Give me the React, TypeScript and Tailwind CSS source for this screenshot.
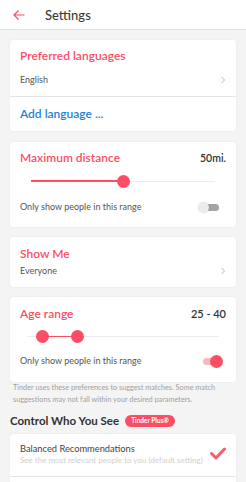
import React from "react";

const RED = "#fd4d64";

function Chevron() {
  return (
    <svg width="6" height="8" viewBox="0 0 6 8" className="shrink-0">
      <path d="M1.5 1 L4.5 4 L1.5 7" fill="none" stroke="#b5b5b5" strokeWidth="1" />
    </svg>
  );
}

function Card({ children, className = "" }: { children: React.ReactNode; className?: string }) {
  return (
    <div className={"mx-[10px] bg-white rounded-[3px] shadow-[0_0_2px_rgba(0,0,0,0.08)] " + className}>
      {children}
    </div>
  );
}

export default function App() {
  return (
    <div
      className="w-[246px] h-[482px] overflow-hidden bg-[#f4f4f4] text-[#424242]"
      style={{ fontFamily: "Lato, 'Open Sans', sans-serif" }}
    >
      {/* Header */}
      <div className="h-[30px] bg-white border-b border-[#e2e2e2] flex items-center">
        <svg width="14" height="12" viewBox="0 0 14 12" className="ml-[12px]">
          <path d="M12.5 6 H2 M6.5 1.5 L2 6 L6.5 10.5" fill="none" stroke={RED} strokeWidth="1.2" />
        </svg>
        <div className="ml-[19px] text-[13px] leading-[16px] text-[#3a3a3a] font-medium">Settings</div>
      </div>

      <div className="pt-[10px] flex flex-col">
        {/* Card 1 */}
        <Card>
          <div className="h-[56px] px-[10px] pt-[9px]">
            <div className="text-[12px] leading-[14px] font-semibold" style={{ color: RED }}>
              Preferred languages
            </div>
            <div className="mt-[10px] flex items-center justify-between text-[9px] leading-[14px] text-[#555]">
              <span>English</span>
              <Chevron />
            </div>
          </div>
          <div className="border-t border-[#e4e4e4] h-[35px] px-[10px] flex items-center text-[12px] font-semibold text-[#1a7fd6]">
            Add language ...
          </div>
        </Card>

        {/* Card 2 */}
        <Card className="mt-[11px] h-[85px] px-[10px] pt-[9px]">
          <div className="flex justify-between items-center leading-[14px]">
            <span className="text-[12px] font-semibold" style={{ color: RED }}>Maximum distance</span>
            <span className="text-[10.5px] font-semibold text-[#333]">50mi.</span>
          </div>
          <div className="relative mt-[10px] h-[12px] mx-[11px]">
            <div className="absolute left-0 right-0 top-[5.5px] h-px bg-[#ececec]" />
            <div className="absolute left-0 w-[92px] top-[5px] h-[1.5px]" style={{ background: RED }} />
            <div className="absolute left-[86px] top-0 w-[13px] h-[13px] rounded-full" style={{ background: RED }} />
          </div>
          <div className="mt-[13px] flex items-center justify-between">
            <span className="text-[9px] leading-[14px] text-[#555]">Only show people in this range</span>
            <div className="relative w-[21px] h-[11px] mr-[7px]">
              <div className="absolute left-[4px] right-0 top-[2px] h-[7px] rounded-full bg-[#a3a3a3]" />
              <div className="absolute left-0 top-0 w-[11px] h-[11px] rounded-full bg-[#ececec] shadow-[0_0_1px_rgba(0,0,0,0.2)]" />
            </div>
          </div>
        </Card>

        {/* Card 3 */}
        <Card className="mt-[10px] h-[50px] px-[10px] pt-[10px]">
          <div className="text-[12px] leading-[14px] font-semibold" style={{ color: RED }}>Show Me</div>
          <div className="mt-[3px] flex items-center justify-between text-[9px] leading-[14px] text-[#555]">
            <span>Everyone</span>
            <Chevron />
          </div>
        </Card>

        {/* Card 4 */}
        <Card className="mt-[10px] h-[85px] px-[10px] pt-[10px]">
          <div className="flex justify-between items-center leading-[14px]">
            <span className="text-[12px] font-semibold" style={{ color: RED }}>Age range</span>
            <span className="text-[11px] font-semibold text-[#333]">25 - 40</span>
          </div>
          <div className="relative mt-[9px] h-[13px] mx-[7px]">
            <div className="absolute left-0 right-0 top-[6px] h-px bg-[#ececec]" />
            <div className="absolute left-[16px] w-[35px] top-[5.5px] h-[1.5px]" style={{ background: RED }} />
            <div className="absolute left-[9px] top-0 w-[13px] h-[13px] rounded-full" style={{ background: RED }} />
            <div className="absolute left-[44px] top-0 w-[13px] h-[13px] rounded-full" style={{ background: RED }} />
          </div>
          <div className="mt-[11px] flex items-center justify-between">
            <span className="text-[9px] leading-[14px] text-[#555]">Only show people in this range</span>
            <div className="relative w-[20px] h-[13px] mr-[3px]">
              <div className="absolute left-0 right-[4px] top-[3px] h-[7px] rounded-full bg-[#f7b7c0]" />
              <div className="absolute right-0 top-0 w-[13px] h-[13px] rounded-full" style={{ background: RED }} />
            </div>
          </div>
        </Card>

        {/* Footer text */}
        <div className="mt-0 px-[13px] text-[7.3px] leading-[12px] text-[#a0a0a0]">
          Tinder uses these preferences to suggest matches. Some match suggestions may not fall within your desired parameters.
        </div>

        {/* Heading */}
        <div className="mt-[8px] px-[10px] flex items-center gap-[6px]">
          <span className="text-[11.5px] leading-[14px] font-bold text-[#333]">Control Who You See</span>
          <span
            className="rounded-full px-[6px] h-[12px] flex items-center text-[6.5px] font-bold text-white"
            style={{ background: RED }}
          >
            Tinder Plus®
          </span>
        </div>

        {/* Card 5 */}
        <Card className="mt-[6px] h-[60px]">
          <div className="h-[43px] px-[10px] pt-[9px] flex items-start justify-between border-b border-[#e4e4e4]">
            <div>
              <div className="text-[9.3px] leading-[12px] text-[#444]">Balanced Recommendations</div>
              <div className="text-[8px] leading-[10px] text-[#cfcfcf] whitespace-nowrap">See the most relevant people to you (default setting)</div>
            </div>
            <svg width="16" height="13" viewBox="0 0 16 13" className="mt-[4px] shrink-0">
              <path d="M1.5 6.5 L6 11 L14.5 2" fill="none" stroke="#f4606c" strokeWidth="3" strokeLinecap="round" strokeLinejoin="round" />
            </svg>
          </div>
        </Card>
      </div>
    </div>
  );
}
